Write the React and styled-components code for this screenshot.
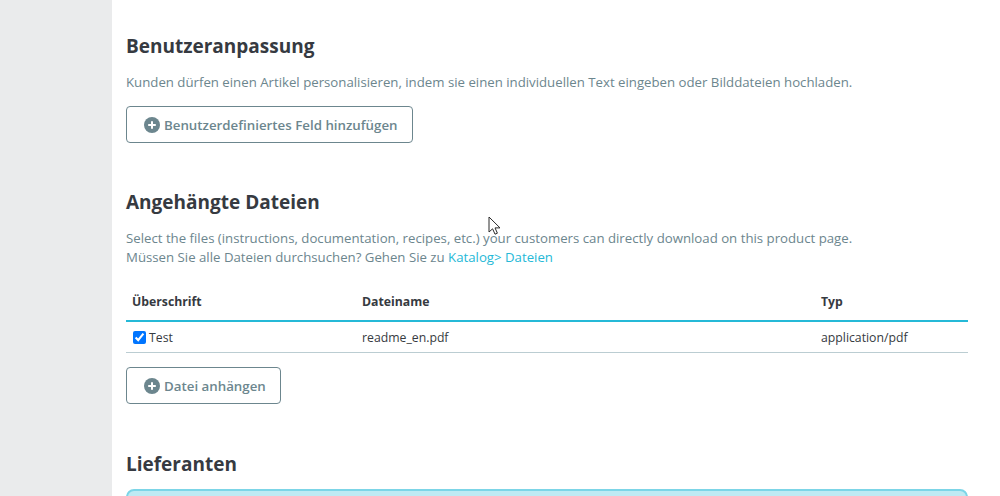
import React from 'react'
import styled, { createGlobalStyle } from 'styled-components'

const GlobalStyle = createGlobalStyle`
  html, body {
    margin: 0;
    height: 100%;
    overflow: hidden;
    background: #fff;
    font-family: "Open Sans", sans-serif;
  }
`
const Page = styled.div`
  display: flex;
  height: 496px;
  overflow: hidden;
  position: relative;
`
const Sidebar = styled.aside`
  width: 112px;
  flex: none;
  background: #eaebec;
`
const Main = styled.main`
  flex: 1;
  padding: 34px 32px 0 14px;
`
const Section = styled.section`
  margin-bottom: ${({ gap }) => gap || 0}px;
`
const Heading = styled.h2`
  margin: 0 0 ${({ below }) => below || 15}px;
  font-size: 19px;
  line-height: 24px;
  font-weight: 700;
  color: #363a41;
`
const Help = styled.p`
  margin: 0;
  font-size: 13.23px;
  line-height: 19.5px;
  color: #6c868e;
`
const Link = styled.a`
  color: #25b9d7;
  text-decoration: none;
`
const Button = styled.button`
  display: flex;
  align-items: center;
  gap: 4px;
  height: 37px;
  margin-top: ${({ top }) => top}px;
  padding: 1px 14px 0 17px;
  border: 1px solid #6c868e;
  border-radius: 4px;
  background: #fff;
  color: #6c868e;
  font: 600 13.3px "Open Sans", sans-serif;
`
const Table = styled.table`
  width: 100%;
  margin-top: 14px;
  border-collapse: collapse;
  table-layout: fixed;
  font-size: 12.25px;
  color: #363a41;
`
const Th = styled.th`
  width: ${({ w }) => w};
  height: 36px;
  padding: 2px 6px 0;
  border-bottom: 2px solid #25b9d7;
  text-align: left;
  font-weight: 700;
`
const Td = styled.td`
  height: 28px;
  padding: 2px 6px 0;
  border-bottom: 1px solid #bbcdd2;
`
const Check = styled.input`
  width: 13px;
  height: 13px;
  margin: 0 3px 0 1px;
  vertical-align: -2px;
  accent-color: #0075ff;
`
const Alert = styled.div`
  height: 60px;
  border: 2px solid #7cd5e7;
  border-radius: 8px;
  background: #beeaf3;
`
const Cursor = styled.svg`
  position: absolute;
  left: 488px;
  top: 216px;
`

const PlusIcon = () => (
  <svg width="16" height="16" viewBox="0 0 16 16">
    <circle cx="8" cy="8" r="8" fill="#6c868e" />
    <path d="M8 4.2v7.6M4.2 8h7.6" stroke="#fff" strokeWidth="2" />
  </svg>
)

const App = () => (
  <Page>
    <GlobalStyle />
    <Sidebar />
    <Main>
      <Section gap={47}>
        <Heading>Benutzeranpassung</Heading>
        <Help>Kunden dürfen einen Artikel personalisieren, indem sie einen individuellen Text eingeben oder Bilddateien hochladen.</Help>
        <Button top={13}><PlusIcon />Benutzerdefiniertes Feld hinzufügen</Button>
      </Section>
      <Section gap={48}>
        <Heading>Angehängte Dateien</Heading>
        <Help>
          Select the files (instructions, documentation, recipes, etc.) your customers can directly download on this product page.<br />
          Müssen Sie alle Dateien durchsuchen? Gehen Sie zu <Link href="#">Katalog&gt; Dateien</Link>
        </Help>
        <Table>
          <thead>
            <tr>
              <Th w="218px">Überschrift</Th>
              <Th w="447px">Dateiname</Th>
              <Th>Typ</Th>
            </tr>
          </thead>
          <tbody>
            <tr>
              <Td><Check type="checkbox" defaultChecked />Test</Td>
              <Td>readme_en.pdf</Td>
              <Td>application/pdf</Td>
            </tr>
          </tbody>
        </Table>
        <Button top={14}><PlusIcon />Datei anhängen</Button>
      </Section>
      <Section>
        <Heading below={13}>Lieferanten</Heading>
        <Alert />
      </Section>
    </Main>
    <Cursor width="14" height="20" viewBox="0 0 14 20">
      <path d="M1 1v15l3.6-3.2 2.4 5.4 2.4-1-2.4-5.3h5z" fill="#fff" stroke="#2b2b2b" strokeWidth="1" />
    </Cursor>
  </Page>
)

export default App
